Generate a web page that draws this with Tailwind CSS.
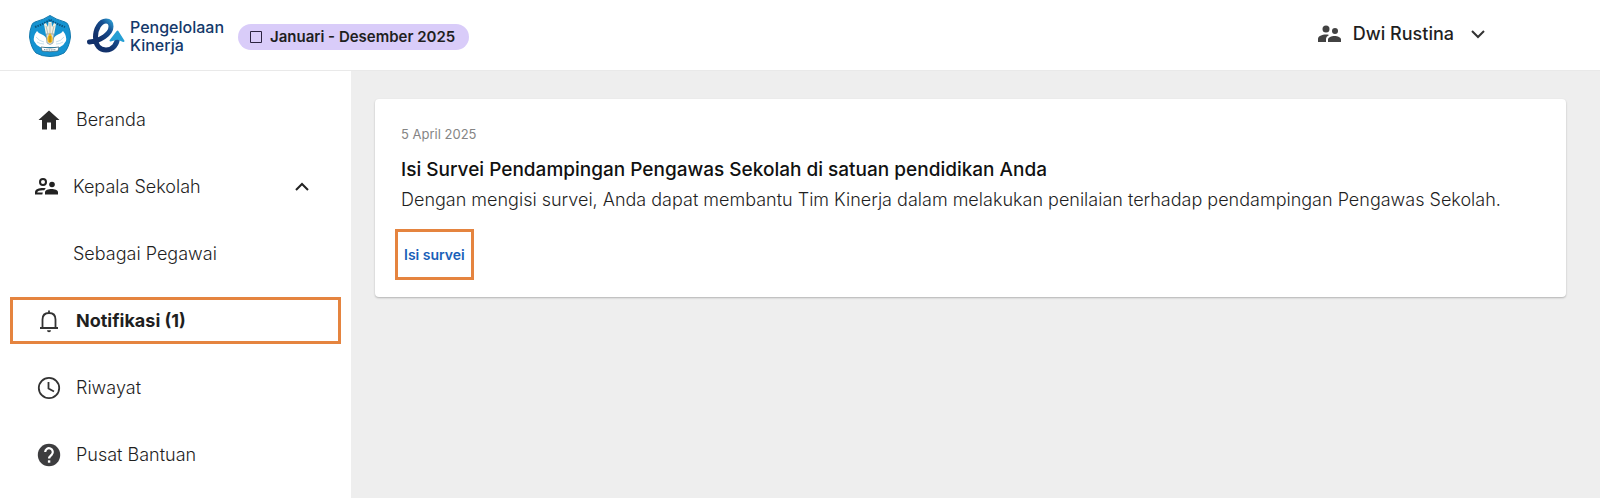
<!DOCTYPE html>
<html lang="id">
<head>
    <meta charset="UTF-8">
    <meta name="viewport" content="width=device-width, initial-scale=1.0">
    <title>Pengelolaan Kinerja - Notifikasi</title>
    <script src="https://cdn.jsdelivr.net/npm/@tailwindcss/browser@4"></script>
</head>
<body class="flex min-h-screen flex-col bg-[#eeeeee] font-['Inter',sans-serif] text-[#1f1f1f]">

    <!-- Header -->
    <header class="z-10 flex items-center justify-between border-b border-[#e9e9e9] bg-white pt-3.5 pr-[110px] pb-3 pl-7">
        <div class="flex items-center">
            <a href="#" class="flex items-center" aria-label="Pengelolaan Kinerja">
                <svg class="size-11" viewBox="0 0 44 44" aria-hidden="true">
                    <path d="M22 1.5 Q28 5.500 37 8 Q40 9 40.500 12 Q42.500 17 42.500 23 Q41 34 36 39 Q30 42.500 22 42.500 Q14 42.500 8 39 Q3 34 1.500 23 Q1.500 17 3.500 12 Q4 9 7 8 Q16 5.500 22 1.500Z" fill="#1593d1" stroke="#1479ad" stroke-width="1"/>
                    <path d="M7 13 Q16 10 22 5.500 Q28 10 37 13" fill="none" stroke="#0c5580" stroke-width="2" stroke-dasharray="1.500 1"/>
                    <path d="M9 17 Q11 20 14 20.500 Q18 22 19 26 L22 29 L25 26 Q26 22 30 20.500 Q33 20 35 17 Q39 22 38 27 Q36 31 32 33 Q30 34 28 33 L16 33 Q14 34 12 33 Q8 31 6 27 Q5 22 9 17Z" fill="#fff"/>
                    <path d="M8 23 Q11 27 16 28 M9 28 Q12 30 16 30 M36 23 Q33 27 28 28 M35 28 Q32 30 28 30" fill="none" stroke="#b5d5e5" stroke-width=".8"/>
                    <path d="M16 10 L18 9 L20 13 L20.500 8 H23.500 L24 13 L26 9 L28 10 L26 21 H18Z" fill="#f4f0df"/>
                    <path d="M18 12 L20 20 M22 9 V20 M26 12 L24 20" stroke="#8c9c9c" stroke-width=".6"/>
                    <path d="M18 20 H26 L25 29 Q22 32 19 29Z" fill="#d7dfdd" stroke="#6e8790" stroke-width=".6"/>
                    <path d="M22 19 Q26 24 24 28 Q22 30 20 28 Q18 24 22 19Z" fill="#f2b91d"/>
                    <path d="M22 22 V28" stroke="#8d6410" stroke-width=".8"/>
                    <path d="M13 33 Q22 35 31 33 L30 37 Q22 38.500 14 37Z" fill="#fff" stroke="#315b70" stroke-width=".7"/>
                    <path d="M16 35.500 Q22 36.500 28 35.500" fill="none" stroke="#526f7a" stroke-width="1" stroke-dasharray="1 .7"/>
                </svg>
                <svg class="ml-3.5 h-10 w-11" viewBox="0 0 44 40" fill="none" aria-hidden="true">
                    <defs>
                        <linearGradient id="arrow" x1="20" y1="30" x2="38" y2="14" gradientUnits="userSpaceOnUse">
                            <stop stop-color="#12316b"/>
                            <stop offset=".55" stop-color="#164f91"/>
                            <stop offset="1" stop-color="#35b6e8"/>
                        </linearGradient>
                    </defs>
                    <path d="M3.500 26 C14 25 25 18 25 10.500 C25 6.500 23 5 20 5 C14 5 9.500 13 9.500 21 C9.500 30 14 34 20 34 C27 34 31.500 28 31.500 21" stroke="url(#arrow)" stroke-width="5" stroke-linecap="round"/>
                    <path d="M31.500 15.500 L37.500 25 L31.500 22.500 L24.500 24.500Z" fill="#269fd4" stroke="#269fd4" stroke-width="2" stroke-linejoin="round"/>
                </svg>
                <span class="text-base leading-[18px] font-medium text-[#14396b]">Pengelolaan<br>Kinerja</span>
            </a>
            <span class="mt-0.5 ml-3.5 flex items-center gap-2 rounded-full bg-[#d9ccf9] py-px pr-3.5 pl-3 text-[15px] leading-6 font-semibold">
                <svg class="size-3" viewBox="0 0 12 12" fill="none" stroke="#2b2340" aria-hidden="true"><path d="M.5.5h11v11H.5z"/></svg>
                Januari - Desember 2025
            </span>
        </div>
        <button type="button" class="mb-1 flex items-center gap-3 text-lg leading-6 font-medium">
            <svg class="h-6 w-6" viewBox="0 0 24 24" fill="#424242" aria-hidden="true">
                <circle cx="9" cy="7" r="3.500"/><circle cx="18" cy="9" r="3"/>
                <path d="M1 20v-3c0-3 4-4.500 8-4.500 1 0 2 .1 3 .4-2 1.100-3 2.500-3 4.100v3zM11 20v-2.500c0-2.300 3.500-3.500 6.500-3.500s6.500 1.200 6.500 3.500V20z"/>
            </svg>
            Dwi Rustina
            <svg class="size-6" viewBox="0 0 24 24" fill="none" stroke="#333" stroke-width="2" aria-hidden="true"><path d="m6 9 6 6 6-6"/></svg>
        </button>
    </header>

    <div class="flex flex-1">
        <!-- Sidebar -->
        <nav class="w-[351px] shrink-0 bg-white px-2.5 pt-[25px]" aria-label="Menu utama">
            <ul class="flex flex-col gap-5 text-lg leading-6 font-light">
                <li>
                    <a href="#" class="flex h-[47px] items-center gap-[15px] pl-[27px]">
                        <svg class="size-6" viewBox="0 0 24 24" fill="#2b2b2b" aria-hidden="true"><path d="M10 21.500v-7h4v7h5v-9.500h3.500L12 2.500 1.500 12H5v9.500z"/></svg>
                        Beranda
                    </a>
                </li>
                <li>
                    <button type="button" class="flex h-[47px] w-full items-center gap-[15px] pr-[27px] pl-6 text-left" aria-expanded="true">
                        <svg class="size-6" viewBox="0 0 24 24" fill="#222" aria-hidden="true">
                            <circle cx="9" cy="7" r="3" fill="none" stroke="#222" stroke-width="2"/><circle cx="18" cy="9.500" r="2.800"/>
                            <path d="M1 19.500v-2.200c0-3 4-4.300 8-4.300 1 0 1.900.1 2.800.3l-1.600 1.900c-3.700-.3-6.700.6-7 2.300h5.600l-.5 2zM11 19.500v-2.200c0-2.200 3.500-3.300 6.500-3.300s6.500 1.100 6.500 3.300v2.200z"/>
                        </svg>
                        Kepala Sekolah
                        <svg class="ml-auto size-6" viewBox="0 0 24 24" fill="none" stroke="#222" stroke-width="2" aria-hidden="true"><path d="m6 15 6-6 6 6"/></svg>
                    </button>
                </li>
                <li>
                    <a href="#" class="flex h-[47px] items-center pl-[63px]">Sebagai Pegawai</a>
                </li>
                <li>
                    <a href="#" class="flex h-[47px] items-center gap-[15px] border-3 border-[#e5843f] pl-6 font-bold" aria-current="page">
                        <svg class="size-6" viewBox="0 0 24 24" fill="none" stroke="#333" stroke-width="1.800" aria-hidden="true">
                            <path d="M3 19h18M5.500 19v-8.500C5.500 6.500 8 4 12 4s6.500 2.500 6.500 6.500V19M12 4V1.500"/><path d="M10 21.200a2 2 0 0 0 4 0z" fill="#333" stroke="none"/>
                        </svg>
                        Notifikasi (1)
                    </a>
                </li>
                <li>
                    <a href="#" class="flex h-[47px] items-center gap-[15px] pl-[27px]">
                        <svg class="size-6" viewBox="0 0 24 24" fill="none" stroke="#333" stroke-width="1.800" aria-hidden="true"><circle cx="12" cy="12" r="10.200"/><path d="M11.500 6v6.500l5.500 3"/></svg>
                        Riwayat
                    </a>
                </li>
                <li>
                    <a href="#" class="flex h-[47px] items-center gap-[15px] pl-[27px]">
                        <svg class="size-6" viewBox="0 0 24 24" fill="none" aria-hidden="true">
                            <circle cx="12" cy="12" r="11.200" fill="#3d3d3f"/>
                            <path d="M8.200 9a3.800 3.800 0 1 1 6.600 2.600c-1.400 1.300-2.700 1.900-2.700 4" stroke="#fff" stroke-width="2.200"/><path d="M10.900 17.300h2.400v2.400h-2.400z" fill="#fff"/>
                        </svg>
                        Pusat Bantuan
                    </a>
                </li>
            </ul>
        </nav>

        <!-- Notifications -->
        <main class="flex-1 pt-7 pr-[34px] pl-6">
            <article class="rounded-sm bg-white px-[26px] pt-6 pb-[17px] shadow-[0_1px_2px_rgba(0,0,0,0.25)]">
                <time datetime="2025-04-05" class="block text-[13px] leading-[22px] text-[#858585]">5 April 2025</time>
                <h1 class="mt-2.5 text-[19px] leading-[30px] font-medium text-[#111]">Isi Survei Pendampingan Pengawas Sekolah di satuan pendidikan Anda</h1>
                <p class="text-lg leading-[30px] font-light">Dengan mengisi survei, Anda dapat membantu Tim Kinerja dalam melakukan penilaian terhadap pendampingan Pengawas Sekolah.</p>
                <a href="#" class="mt-3.5 -ml-1.5 inline-flex h-[51px] items-center border-3 border-[#e5843f] px-1.5 text-sm font-semibold text-[#1a5fb8]">Isi survei</a>
            </article>
        </main>
    </div>

</body>
</html>
